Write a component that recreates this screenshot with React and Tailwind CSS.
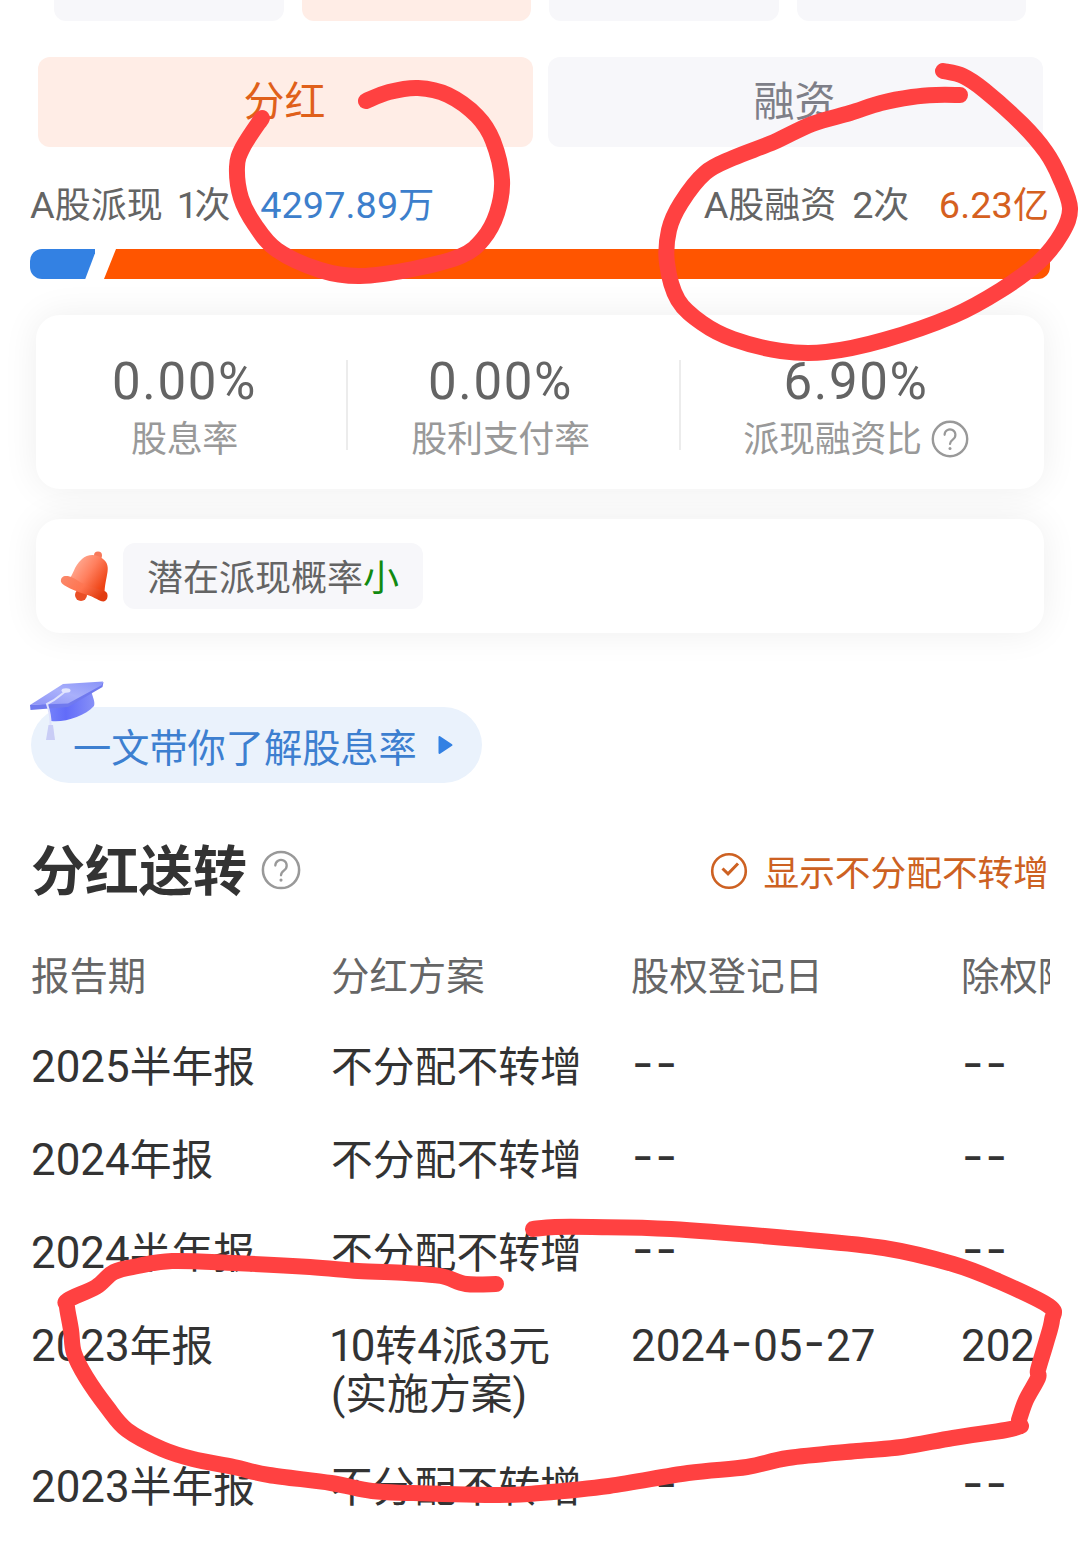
const DASH = '--'

const STATS = [
  { value: '0.00%', label: '股息率', cell: 'w-[312px] pr-[13px] border-r-2' },
  { value: '0.00%', label: '股利支付率', cell: 'w-[333px] pr-[26px] border-r-2' },
  { value: '6.90%', label: '派现融资比', cell: 'flex-1 pr-[13px]', help: true },
]

const HEADERS = ['报告期', '分红方案', '股权登记日', '除权除息日']

const ROWS = [
  { period: '2025半年报', plan: ['不分配不转增'], record: DASH, exDate: DASH },
  { period: '2024年报', plan: ['不分配不转增'], record: DASH, exDate: DASH },
  { period: '2024半年报', plan: ['不分配不转增'], record: DASH, exDate: DASH },
  { period: '2023年报', plan: ['10转4派3元', '(实施方案)'], record: '2024-05-27', exDate: '202' },
  { period: '2023半年报', plan: ['不分配不转增'], record: DASH, exDate: DASH },
]

// Freehand marker strokes, as [x, y] points
const STROKES = [
  [[366, 101], [389, 92], [418, 88], [448, 95], [477, 116], [493, 141], [502, 180], [497, 213], [483, 239], [461, 256], [413, 269], [360, 276], [320, 270], [277, 250], [255, 225], [241, 198], [237, 167], [243, 147], [262, 118]],
  [[943, 71], [963, 76], [984, 90], [1022, 124], [1046, 152], [1060, 178], [1070, 208], [1062, 233], [1039, 262], [1001, 290], [953, 316], [884, 340], [826, 352], [781, 351], [733, 339], [702, 323], [678, 300], [667, 263], [669, 230], [681, 203], [705, 173], [733, 158], [774, 142], [812, 124], [850, 113], [881, 103], [912, 97], [936, 95], [960, 95]],
  [[533, 1229], [555, 1227], [592, 1227], [671, 1229], [798, 1239], [884, 1248], [953, 1264], [998, 1281], [1049, 1306], [1052, 1320], [1046, 1343], [1038, 1370], [1038, 1378], [1026, 1400], [1019, 1420]],
  [[1021, 1426], [1006, 1430], [953, 1438], [902, 1447], [857, 1451], [788, 1458], [747, 1467], [688, 1473], [609, 1486], [540, 1493], [499, 1495], [413, 1493], [372, 1491], [331, 1483], [269, 1475], [234, 1467], [193, 1459], [162, 1449], [127, 1430], [107, 1407], [86, 1377], [74, 1353], [71, 1330], [67, 1307], [68, 1300], [96, 1287], [114, 1272], [138, 1266], [172, 1261], [234, 1263], [310, 1267], [358, 1271], [406, 1273], [441, 1276], [466, 1284], [496, 1284]],
]

function smooth(pts) {
  let d = `M${pts[0][0]} ${pts[0][1]}`
  for (let i = 0; i < pts.length - 1; i++) {
    const a = pts[i - 1] || pts[i]
    const b = pts[i]
    const c = pts[i + 1]
    const e = pts[i + 2] || c
    d += `C${b[0] + (c[0] - a[0]) / 6} ${b[1] + (c[1] - a[1]) / 6} ${c[0] - (e[0] - b[0]) / 6} ${c[1] - (e[1] - b[1]) / 6} ${c[0]} ${c[1]}`
  }
  return d
}

// Digits run slightly larger than the Chinese text, hyphens are wide, "1" is narrow
function Mixed({ children }) {
  return children.split(/(-|1|[A-Z02-9.%]+)/).map((part, i) => {
    if (part === '-') {
      return <span key={i} className="relative -top-[2px] left-px tracking-[2px] font-['Inter'] text-[1.12em] leading-[0]">-</span>
    }
    if (part === '1') return <span key={i} className="-ml-[2px] -mr-[3px] text-[1.05em] leading-[0]">1</span>
    if (/[A-Z0-9.%]/.test(part)) return <span key={i} className="text-[1.05em] leading-[0]">{part}</span>
    return part
  })
}

function HelpIcon({ className }) {
  return (
    <svg className={className} viewBox="0 0 38 38" fill="none" stroke="#999" strokeLinecap="round">
      <circle cx="19" cy="19" r="17.2" strokeWidth="2.4" />
      <path d="M13.6 14.8a5.400 5.400 0 1 1 8.400 4.500c-1.900 1.400-3 2.300-3 4.700" strokeWidth="2.2" />
      <circle cx="19" cy="28.6" r="1.5" fill="#999" stroke="none" />
    </svg>
  )
}

function BellIcon() {
  return (
    <svg className="w-[52px] h-[54px] shrink-0" viewBox="0 0 52 54">
      <defs>
        <linearGradient id="bell" x1="0.1" y1="0.2" x2="0.9" y2="0.75">
          <stop offset="0" stopColor="#ffb09a" />
          <stop offset="0.5" stopColor="#ff7f5e" />
          <stop offset="1" stopColor="#ee4314" />
        </linearGradient>
        <linearGradient id="rim" x1="0" y1="0" x2="1" y2="0.5">
          <stop offset="0" stopColor="#fa8a6c" />
          <stop offset="0.55" stopColor="#ff7450" />
          <stop offset="1" stopColor="#e23c10" />
        </linearGradient>
      </defs>
      <circle cx="39" cy="6.5" r="4" fill="#f7795a" />
      <circle cx="22" cy="46" r="6" fill="#ea4f26" />
      <path d="M23 10C28 5 37 5 42 8.500C48 12 49.500 17 48.500 23C47.500 30 45.500 36 45.500 46L9 31C15 26 14 18 23 10Z" fill="url(#bell)" />
      <path d="M6 27C11 26.500 15 29 21 33C30 38.500 40 39.500 46.500 42.500C50 44.500 49 52 44.500 52.500C40 52 36 48.500 30 46.500C20 43.500 8 39 3 34.500C0.500 31.500 2.500 27.500 6 27Z" fill="url(#rim)" />
    </svg>
  )
}

function CapIcon() {
  return (
    <svg className="absolute left-[-2px] top-[-27px] w-[76px] h-[62px]" viewBox="0 0 76 62">
      <defs>
        <linearGradient id="capTop" x1="0" y1="1" x2="1" y2="0">
          <stop offset="0" stopColor="#8d93f6" />
          <stop offset="0.5" stopColor="#a9b0fb" />
          <stop offset="1" stopColor="#8a94f8" />
        </linearGradient>
        <linearGradient id="capBase" x1="0" y1="0" x2="1" y2="0">
          <stop offset="0" stopColor="#7683fb" />
          <stop offset="0.4" stopColor="#626cf9" />
          <stop offset="1" stopColor="#8790f7" />
        </linearGradient>
      </defs>
      <path d="M18 24L22 41C35 43 56 36 65 26C66.500 22 63 15 62.500 12Z" fill="url(#capBase)" />
      <path d="M1 25L1.500 30L39 27L73.500 7L74.500 2L38 22Z" fill="#7079ee" />
      <path d="M1 25L34 4L74 1.500L73 5L39 23.500Z" fill="url(#capTop)" />
      <path d="M37 11C32 14 29 19 18 24C20 30 22 36 21.500 45" fill="none" stroke="#dfe2fd" strokeWidth="2" />
      <ellipse cx="37" cy="10.500" rx="4.500" ry="2.200" fill="#e3e6fe" />
      <path d="M19.500 45H24L26 60H17Z" fill="#c9cdf6" />
    </svg>
  )
}

function Summary({ label, count, amount, color }) {
  return (
    <div className="flex items-center text-[36px] tracking-[-0.4px] text-[#646464]">
      <span className="tracking-normal"><Mixed>{label}</Mixed></span>
      <span className="ml-4"><Mixed>{count}</Mixed></span>
      <span className={`ml-[30px] tracking-[0.1px] ${color}`}><Mixed>{amount}</Mixed></span>
    </div>
  )
}

export default function App() {
  return (
    <div className="relative w-[1080px] h-[1560px] overflow-hidden bg-white font-['Roboto','Noto_Sans_CJK_SC',sans-serif] text-[#333] whitespace-nowrap">
      {/* Upper tabs, scrolled mostly out of view */}
      <div className="flex gap-[18px] px-[54px] h-[21px]">
        <div className="flex-1 rounded-b-xl bg-[#f7f7fa]" />
        <div className="flex-1 rounded-b-xl bg-[#ffede6]" />
        <div className="flex-1 rounded-b-xl bg-[#f7f7fa]" />
        <div className="flex-1 rounded-b-xl bg-[#f7f7fa]" />
      </div>

      <div className="mt-9 ml-[38px] mr-[37px] flex gap-[15px] h-[90px] text-[41px]">
        <div className="flex-1 pt-[2px] pr-[2px] flex items-center justify-center rounded-xl bg-[#ffede6] text-[#e0601a]">分红</div>
        <div className="flex-1 pt-[2px] pr-[2px] flex items-center justify-center rounded-xl bg-[#f7f7fa] text-[#7e7f88]">融资</div>
      </div>

      <div className="h-[102px] pt-[15px] pl-[30px] pr-[31px] flex items-center justify-between">
        <Summary label="A股派现" count="1次" amount="4297.89万" color="text-[#3d7fcc]" />
        <Summary label="A股融资" count="2次" amount="6.23亿" color="text-[#d5601f]" />
      </div>

      <div className="mx-[30px] flex gap-[9px] h-[30px]">
        <div className="w-[65px] rounded-l-xl bg-[#3381e3] [clip-path:polygon(0_0,100%_0,100%_14%,85%_100%,0_100%)]" />
        <div className="flex-1 rounded-r-xl bg-[#ff5500] [clip-path:polygon(12px_0,100%_0,100%_100%,0_100%)]" />
      </div>

      <div className="mt-9 mx-9 h-[174px] pt-[6px] flex items-center rounded-3xl bg-white shadow-[0_0_36px_rgba(0,0,0,0.07)]">
        {STATS.map(({ value, label, cell, help }) => (
          <div key={label} className={`h-[90px] flex flex-col items-center border-[#ececec] ${cell}`}>
            <div className="h-[46px] leading-[44px] text-[51px] tracking-[1.6px] text-[#646464]">{value}</div>
            <div className="h-[68px] leading-[68px] flex items-center gap-[9px] text-[36px] tracking-[-0.3px] text-[#999]">
              <span className="pt-1">{label}</span>
              {help && <HelpIcon className="mt-[2px] w-[38px] h-[38px]" />}
            </div>
          </div>
        ))}
      </div>

      <div className="relative mt-[30px] mx-9 h-[114px] pl-[23px] flex items-center gap-3 rounded-3xl bg-white shadow-[0_0_36px_rgba(0,0,0,0.07)]">
        <BellIcon />
        <div className="w-[300px] h-[66px] pt-[5px] flex items-center justify-center rounded-xl bg-[#f7f7fa] text-[36px] text-[#646464]">
          潜在派现概率<span className="text-[#118a11]">小</span>
        </div>
      </div>

      <div className="relative mt-[74px] ml-[31px] w-[451px] h-[76px] pl-[42px] flex items-center rounded-full bg-[#eaf2fc] text-[38.2px] text-[#3d7fd0]">
        <CapIcon />
        <span className="relative pt-[9px]">一文带你了解股息率</span>
        <svg className="ml-[21px] w-[15px] h-[20px]" viewBox="0 0 15 20">
          <path d="M1.500 2L13.500 10L1.500 18Z" fill="#3381e3" stroke="#3381e3" strokeWidth="2" strokeLinejoin="round" />
        </svg>
      </div>

      <div className="mt-[45px] pl-[31px] pr-[31px] h-[84px] flex items-center justify-between">
        <div className="flex items-center gap-[14px]">
          <h2 className="pt-[6px] text-[54px] leading-none font-bold">分红送转</h2>
          <HelpIcon className="w-[40px] h-[40px]" />
        </div>
        <div className="flex items-center gap-4 text-[35.7px] text-[#cd6122]">
          <svg className="mt-[3px] w-[38px] h-[38px]" viewBox="0 0 38 38" fill="none" stroke="currentColor" strokeWidth="2.6">
            <circle cx="19" cy="19" r="16.8" />
            <path d="M12.500 16.500L18 21.800L28 11.500" strokeWidth="3" />
          </svg>
          <span className="pt-[9px]">显示不分配不转增</span>
        </div>
      </div>

      <div className="ml-[31px] mr-[30px] mt-[17px] overflow-hidden">
        <div className="grid grid-cols-[300px_300px_330px_300px] h-[92px] pt-[3px] items-center text-[38.4px] text-[#666]">
          {HEADERS.map(h => <div key={h}>{h}</div>)}
        </div>
        {ROWS.map(({ period, plan, record, exDate }) => (
          <div key={period} className="grid grid-cols-[300px_300px_330px_300px] pt-[23px] pb-[22px] text-[41.8px] leading-[48px]">
            <div className="h-12"><Mixed>{period}</Mixed></div>
            <div>{plan.map(line => <div key={line} className="h-12"><Mixed>{line}</Mixed></div>)}</div>
            <div className="h-12"><Mixed>{record}</Mixed></div>
            <div className="h-12"><Mixed>{exDate}</Mixed></div>
          </div>
        ))}
      </div>

      {/* Marker annotations on top of the page */}
      <svg className="absolute inset-0 w-[1080px] h-[1560px] pointer-events-none" viewBox="0 0 1080 1560" fill="none" stroke="#ff4141" strokeWidth="16" strokeLinecap="round" strokeLinejoin="round">
        {STROKES.map((pts, i) => <path key={i} d={smooth(pts)} />)}
      </svg>
    </div>
  )
}
